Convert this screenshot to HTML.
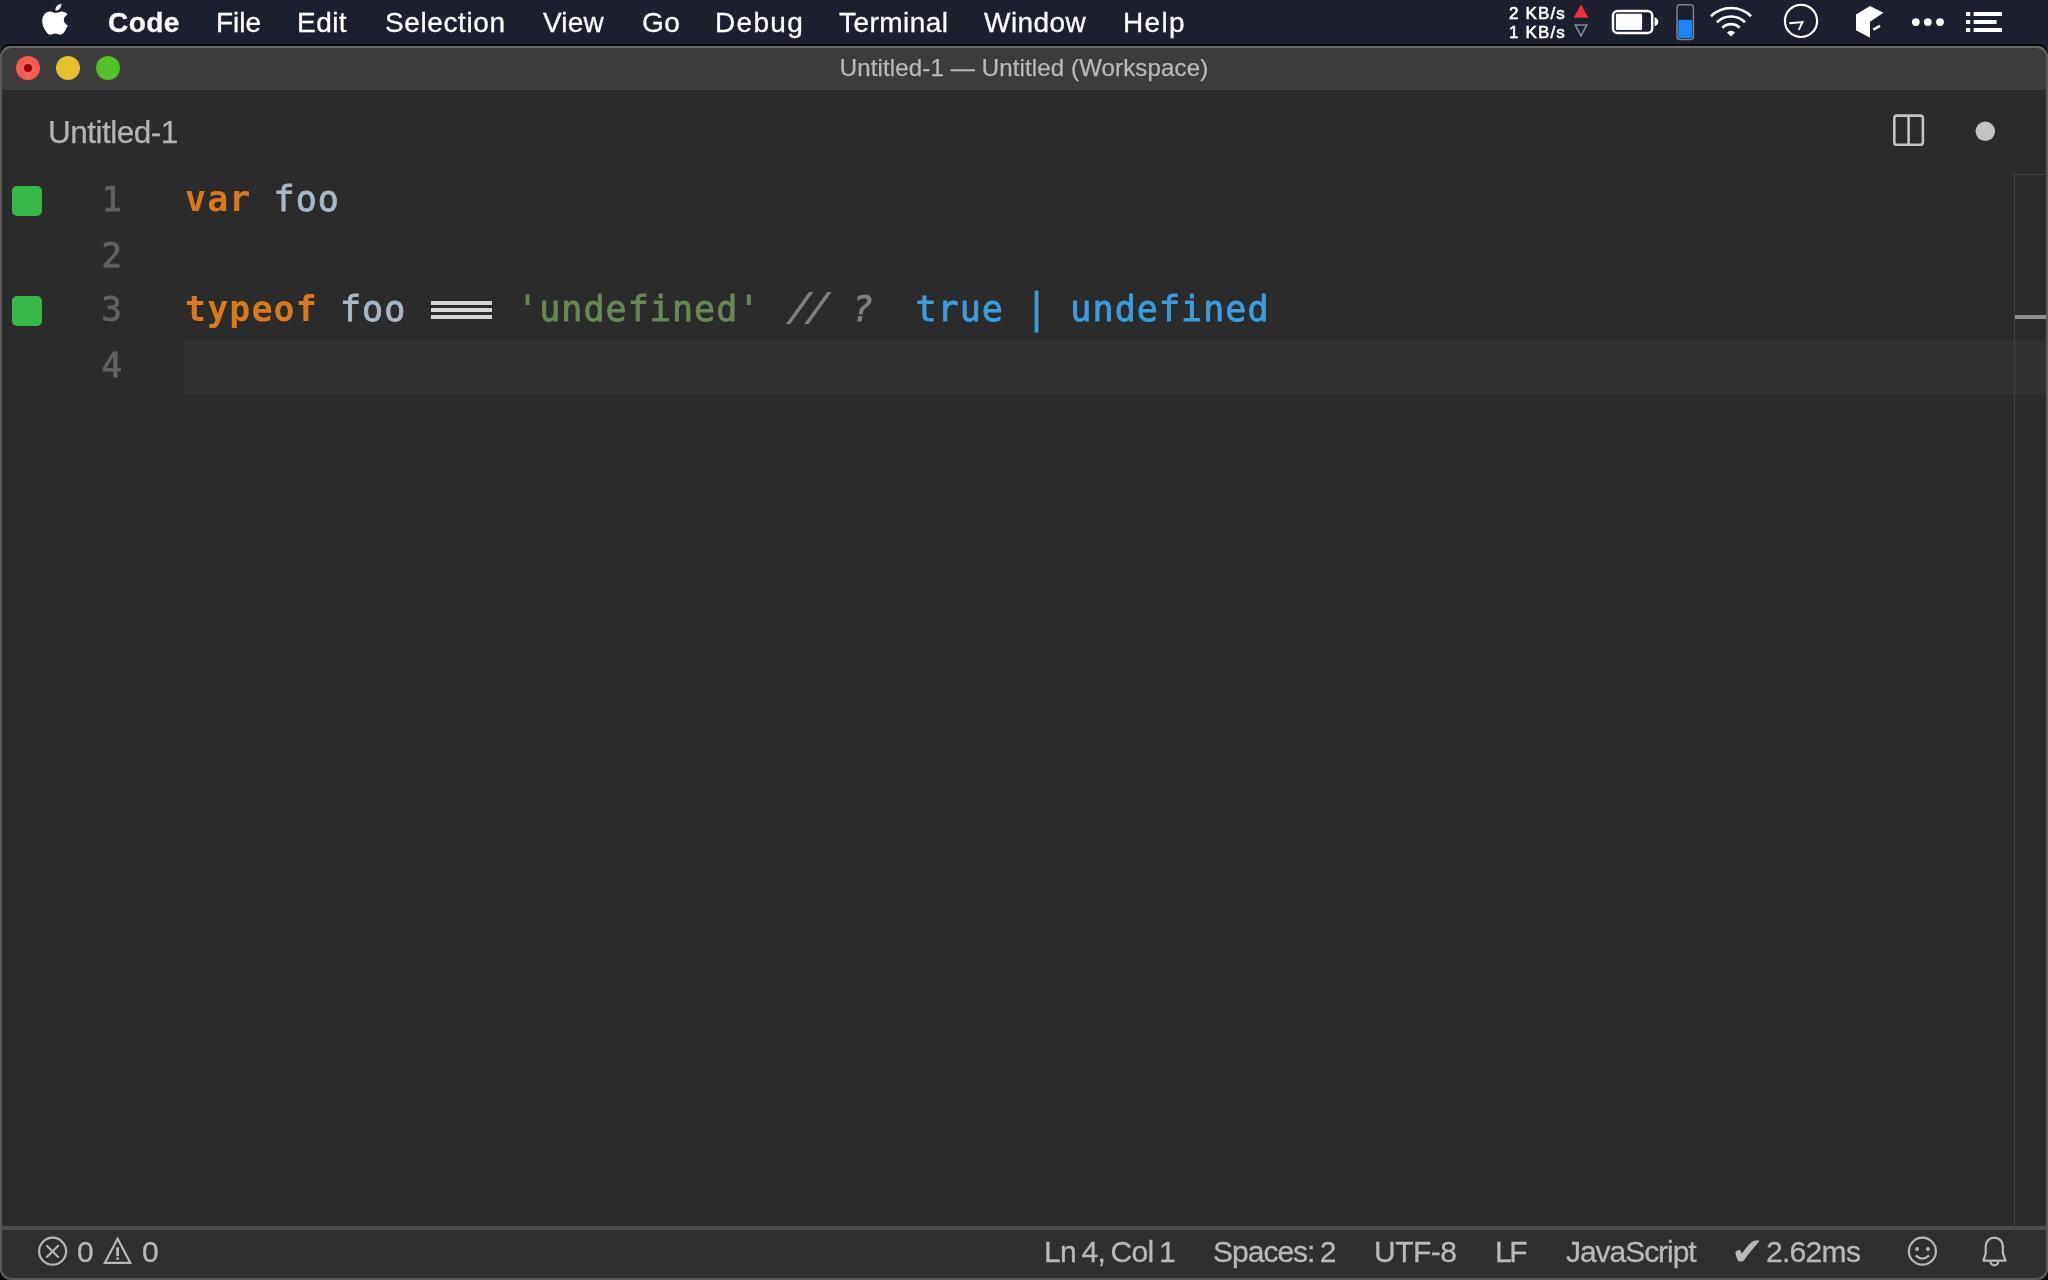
<!DOCTYPE html>
<html lang="en">
<head>
<meta charset="utf-8">
<title>Untitled-1 — Untitled (Workspace)</title>
<style>
*{box-sizing:border-box;margin:0;padding:0}
html,body{width:2048px;height:1280px;overflow:hidden;background:#1c1f2e}
body{position:relative;font-family:"Liberation Sans",sans-serif;-webkit-font-smoothing:antialiased}
.abs{position:absolute}
.mi,#net,#title,#tabname,.ln,.code,.si{will-change:transform}
/* ---------- macOS menu bar ---------- */
#menubar{position:absolute;left:0;top:0;width:2048px;height:45px;background:#1c1f2e}
#menubar .mi{position:absolute;top:1px;height:44px;line-height:44px;font-size:28px;color:#fff;white-space:nowrap;letter-spacing:.45px;-webkit-text-stroke:.3px #fff}
#menubar .mi.b{font-weight:bold}
#net{position:absolute;left:1496px;top:5px;width:70px;font-size:17px;line-height:18.5px;color:#fff;text-align:right;white-space:nowrap;letter-spacing:1.15px;-webkit-text-stroke:.6px #fff}
/* ---------- window ---------- */
#win{position:absolute;left:0;top:46px;width:2048px;height:1234px;background:#2b2b2b;border-radius:11px 11px 11px 11px;overflow:hidden;box-shadow:0 -2px 0 0 #000}
#winborder{position:absolute;left:0;top:46px;width:2048px;height:1234px;border:2px solid #5a5a5a;border-top:2px solid #6a6a6a;border-right-width:2px;border-radius:11px;pointer-events:none}
#titlebar{position:absolute;left:0;top:0;width:2048px;height:44px;background:#3c3c3c}
#title{position:absolute;left:0;top:-1px;width:2048px;height:45px;line-height:45px;text-align:center;font-size:24px;letter-spacing:.15px;color:#b9b9b9;-webkit-text-stroke:.25px #b9b9b9}
.tl{position:absolute;top:10px;width:24px;height:24px;border-radius:50%}
#tabs{position:absolute;left:0;top:44px;width:2048px;height:85px;background:#2b2b2b}
#tabname{position:absolute;left:48px;top:64px;font-size:31.5px;line-height:44px;color:#b4b4b4;white-space:nowrap;letter-spacing:-.5px;-webkit-text-stroke:.25px #b4b4b4}
/* ---------- editor ---------- */
#editor{position:absolute;left:0;top:126px;width:2048px;height:1053px;background:#2b2b2b}
.ln{position:absolute;left:60px;width:62px;text-align:right;font:34px/55px "DejaVu Sans Mono","Liberation Mono",monospace;color:#606366;-webkit-text-stroke:.8px #606366}
.code{position:absolute;left:185px;font:35px/55px "DejaVu Sans Mono","Liberation Mono",monospace;letter-spacing:1.06px;white-space:pre;color:#a9b7c6;-webkit-text-stroke:.85px}
.op{position:relative;display:inline-block;height:55px;vertical-align:top;color:transparent;-webkit-text-stroke:0}
.op::after{content:"";position:absolute;left:3px;top:19px;width:61px;height:19px;background:linear-gradient(#d7d7d7,#d7d7d7) 0 0/100% 4px no-repeat,linear-gradient(#d7d7d7,#d7d7d7) 0 7px/100% 4px no-repeat,linear-gradient(#d7d7d7,#d7d7d7) 0 14.4px/100% 4.4px no-repeat}
.kw{color:#d9791c;font-weight:bold;-webkit-text-stroke:0}
.str{color:#6a8759}
.cm{color:#808080;font-style:italic}
.sl{display:inline-block;letter-spacing:-2.67px;margin-right:7.46px;transform:translate(7.5px,-1.6px) skewX(-14deg) scaleY(1.08)}
.qm{position:relative;left:3px}
.val{color:#3c9ddc}
.pipe{display:inline-block;transform:translateY(-1px) scaleY(1.19)}
.gut{position:absolute;left:12px;width:30px;height:30px;border-radius:5px;background:#37b64a}
#curline{position:absolute;left:184px;top:168px;width:1864px;height:54px;background:#323232}
/* ---------- status bar ---------- */
#status{position:absolute;left:0;top:1180px;width:2048px;height:54px;background:#2f2f2f;border-top:4px solid #4b4b4b}
#status .si{position:absolute;top:-1px;height:46px;line-height:46px;font-size:30px;color:#b9b9b9;white-space:pre;-webkit-text-stroke:.3px #b9b9b9}
</style>
</head>
<body>
<div id="menubar">
  <svg class="abs" style="left:41px;top:3.3px" width="29.1" height="35.4" viewBox="0 0 28 34"><path fill="#fff" d="M19.6 0.6c0.2 1.7-0.5 3.4-1.5 4.6-1 1.3-2.700 2.200-4.300 2.100-0.200-1.700 0.600-3.400 1.500-4.500 1.100-1.300 2.900-2.200 4.300-2.200zM24.800 11.400c-2.600 1.600-3.100 4.300-2.600 6.200 0.600 2 2 3.300 3.600 3.900-0.700 2.100-1.500 3.500-2.600 5.200-1.300 1.900-2.600 3.800-4.600 3.800-2 0-2.500-1.200-4.800-1.200-2.300 0-2.900 1.200-4.800 1.200-2 0-3.400-2-4.700-3.900-3-4.500-4.200-10.700-1.900-14.600 1.400-2.400 3.900-3.800 6.400-3.800 2.300 0 3.700 1.300 5.400 1.300 1.700 0 3.200-1.400 5.700-1.400 1.900 0 4.200 0.900 5.700 2.700-0.300 0.200-0.500 0.400-0.800 0.600z"/></svg>
  <span class="mi b" style="left:108px">Code</span>
  <span class="mi" style="left:216px;letter-spacing:0">File</span>
  <span class="mi" style="left:297px">Edit</span>
  <span class="mi" style="left:384.5px;letter-spacing:.6px">Selection</span>
  <span class="mi" style="left:543px;letter-spacing:.2px">View</span>
  <span class="mi" style="left:642px">Go</span>
  <span class="mi" style="left:715px;letter-spacing:1.3px">Debug</span>
  <span class="mi" style="left:839px">Terminal</span>
  <span class="mi" style="left:984px">Window</span>
  <span class="mi" style="left:1122.5px;letter-spacing:1.3px">Help</span>
  <svg class="abs" style="left:1490px;top:0" width="558" height="45" viewBox="1490 0 558 45">
    <path d="M1581 4.4L1588.3 17.8H1573.7Z" fill="#f03232"/>
    <path d="M1575.2 25L1586.8 25L1581 35.8Z" fill="none" stroke="#868995" stroke-width="1.6" stroke-linejoin="miter"/>
    <rect x="1613" y="11" width="39.2" height="22" rx="4.5" fill="none" stroke="#fff" stroke-width="2.5"/>
    <rect x="1615.9" y="13.8" width="26.2" height="16.2" rx="1" fill="#fff"/>
    <path d="M1654.6 17.2c2.4 .6 3.7 2.4 3.7 4.500s-1.3 3.900-3.7 4.500z" fill="#fff"/>
    <rect x="1677" y="4.8" width="16.4" height="34.6" rx="3" fill="none" stroke="#80838f" stroke-width="1.5"/>
    <rect x="1678.3" y="19.8" width="13.8" height="18.3" rx="1.5" fill="#1a84ff"/>
    <g fill="none" stroke="#fff" stroke-width="2.7"><path d="M1711.02 16.17A28.5 28.5 0 0 1 1750.98 16.17"/><path d="M1716.98 22.23A20 20 0 0 1 1745.02 22.23"/><path d="M1722.38 27.73A12.3 12.3 0 0 1 1739.62 27.73"/></g>
    <path d="M1731 36.5L1727 32.43A5.7 5.7 0 0 1 1735 32.43Z" fill="#fff"/>
    <circle cx="1801" cy="20.9" r="16.1" fill="none" stroke="#fff" stroke-width="2.2"/>
    <path d="M1789.3 23.300L1802.4 22.100L1798.8 29.9" fill="none" stroke="#fff" stroke-width="2" stroke-linejoin="miter"/>
    <path d="M1856 14.400L1870 6L1883.5 12.700L1870 21.700V37.700L1856 30.200Z" fill="#fff"/>
    <path d="M1873.3 29.700L1880 25.8" stroke="#fff" stroke-width="2.6" fill="none"/>
    <circle cx="1915.8" cy="22.1" r="3.9" fill="#fff"/><circle cx="1927.8" cy="22.1" r="3.9" fill="#fff"/><circle cx="1940" cy="22.1" r="3.9" fill="#fff"/>
    <path d="M1966 12h4.200v4h-4.200zM1966 20h4.200v4h-4.200zM1966 28h4.200v4h-4.200zM1973.6 12H2002v4h-28.400zM1973.6 20H1996.500v4h-22.900zM1973.6 28H2002v4h-28.400z" fill="#fff"/>
  </svg>
  <div id="net">2 KB/s<br>1 KB/s</div>
</div>

<div class="abs" style="left:0;top:1262px;width:2048px;height:18px;background:#05060a"></div>
<div id="win">
  <div id="titlebar">
    <div class="tl" style="left:16px;background:#fc5b57"></div>
    <div class="abs" style="left:24px;top:18px;width:8px;height:8px;border-radius:50%;background:#8f0500"></div>
    <div class="tl" style="left:56px;background:#e5bf2c"></div>
    <div class="tl" style="left:96px;background:#53c22b"></div>
    <div id="title">Untitled-1 — Untitled (Workspace)</div>
  </div>
  <div id="tabs"></div>
  <div id="tabname">Untitled-1</div>

  <div id="editor">
    <div id="curline"></div>
    <div class="gut" style="top:14px"></div>
    <div class="gut" style="top:124px"></div>
    <div class="ln" style="top:0px">1</div>
    <div class="ln" style="top:56px">2</div>
    <div class="ln" style="top:110px">3</div>
    <div class="ln" style="top:166px">4</div>
    <div class="code" style="top:0px"><span class="kw">var</span> foo</div>
    <div class="code" style="top:110px"><span class="kw">typeof</span> foo <span class="op">===</span> <span class="str">'undefined'</span> <span class="cm"><span class="sl">//</span> <span class="qm">?</span></span>  <span class="val">true <span class="pipe">|</span> undefined</span></div>
  </div>

  <div id="status">
    <span class="si" style="left:77px">0</span>
    <span class="si" style="left:142px">0</span>
    <span class="si" style="left:1044px;letter-spacing:-.6px;word-spacing:-2.5px">Ln 4, Col 1</span>
    <span class="si" style="left:1213px;letter-spacing:-1px;word-spacing:-2px">Spaces: 2</span>
    <span class="si" style="left:1374px;letter-spacing:-.5px">UTF-8</span>
    <span class="si" style="left:1495px;letter-spacing:-2.5px">LF</span>
    <span class="si" style="left:1566px;letter-spacing:-1.05px">JavaScript</span>
    <span class="si" style="left:1731px;font-size:39px;top:-1px;-webkit-text-stroke:0">✔</span>
    <span class="si" style="left:1766px;letter-spacing:-.7px">2.62ms</span>
  </div>
</div>
<svg class="abs" style="left:0;top:0" width="2048" height="1280" viewBox="0 0 2048 1280">
  <!-- editor actions -->
  <rect x="1894.3" y="115.6" width="28.6" height="29.2" rx="2.6" fill="none" stroke="#c4c4c4" stroke-width="2.6"/>
  <path d="M1908.6 115.6V144.8" stroke="#c4c4c4" stroke-width="2.6"/>
  <circle cx="1985.3" cy="131.3" r="9.7" fill="#c4c4c4"/>
  <!-- overview ruler -->
  <path d="M2046 174.500H2014.500V1226" fill="none" stroke="#414141" stroke-width="1"/>
  <rect x="2015" y="315" width="32" height="4" fill="#8e8e8e"/>
  <!-- status icons -->
  <g fill="none" stroke="#b9b9b9" stroke-width="2.2">
    <circle cx="52.6" cy="1251.2" r="13.5"/>
    <path d="M46.4 1245.200L58.7 1257.500M58.7 1245.200L46.4 1257.5" stroke-width="2"/>
    <path d="M117.6 1238.800L130.3 1262.800H104.900Z" stroke-linejoin="miter"/>
    <circle cx="1922.4" cy="1251.2" r="13.5"/>
    <path d="M1915.6 1255.400Q1922.4 1261.8 1929.2 1255.4" stroke-linecap="butt"/>
    <path d="M1983.4 1260.600L1985.7 1253.500V1246.200A8.6 8.6 0 0 1 2002.9 1246.200V1253.500L2005.6 1260.600Z" stroke-linejoin="round"/>
    <path d="M1990.6 1261.600A3.8 3.8 0 0 0 1998.2 1261.6"/>
  </g>
  <g fill="#b9b9b9">
    <rect x="116.2" y="1247.3" width="2.8" height="8.8"/><rect x="116.2" y="1257.5" width="2.8" height="2.2"/>
    <circle cx="1917.1" cy="1249" r="2"/><circle cx="1927.9" cy="1249" r="2"/>
  </g>
</svg>
<div id="winborder"></div>
</body>
</html>
